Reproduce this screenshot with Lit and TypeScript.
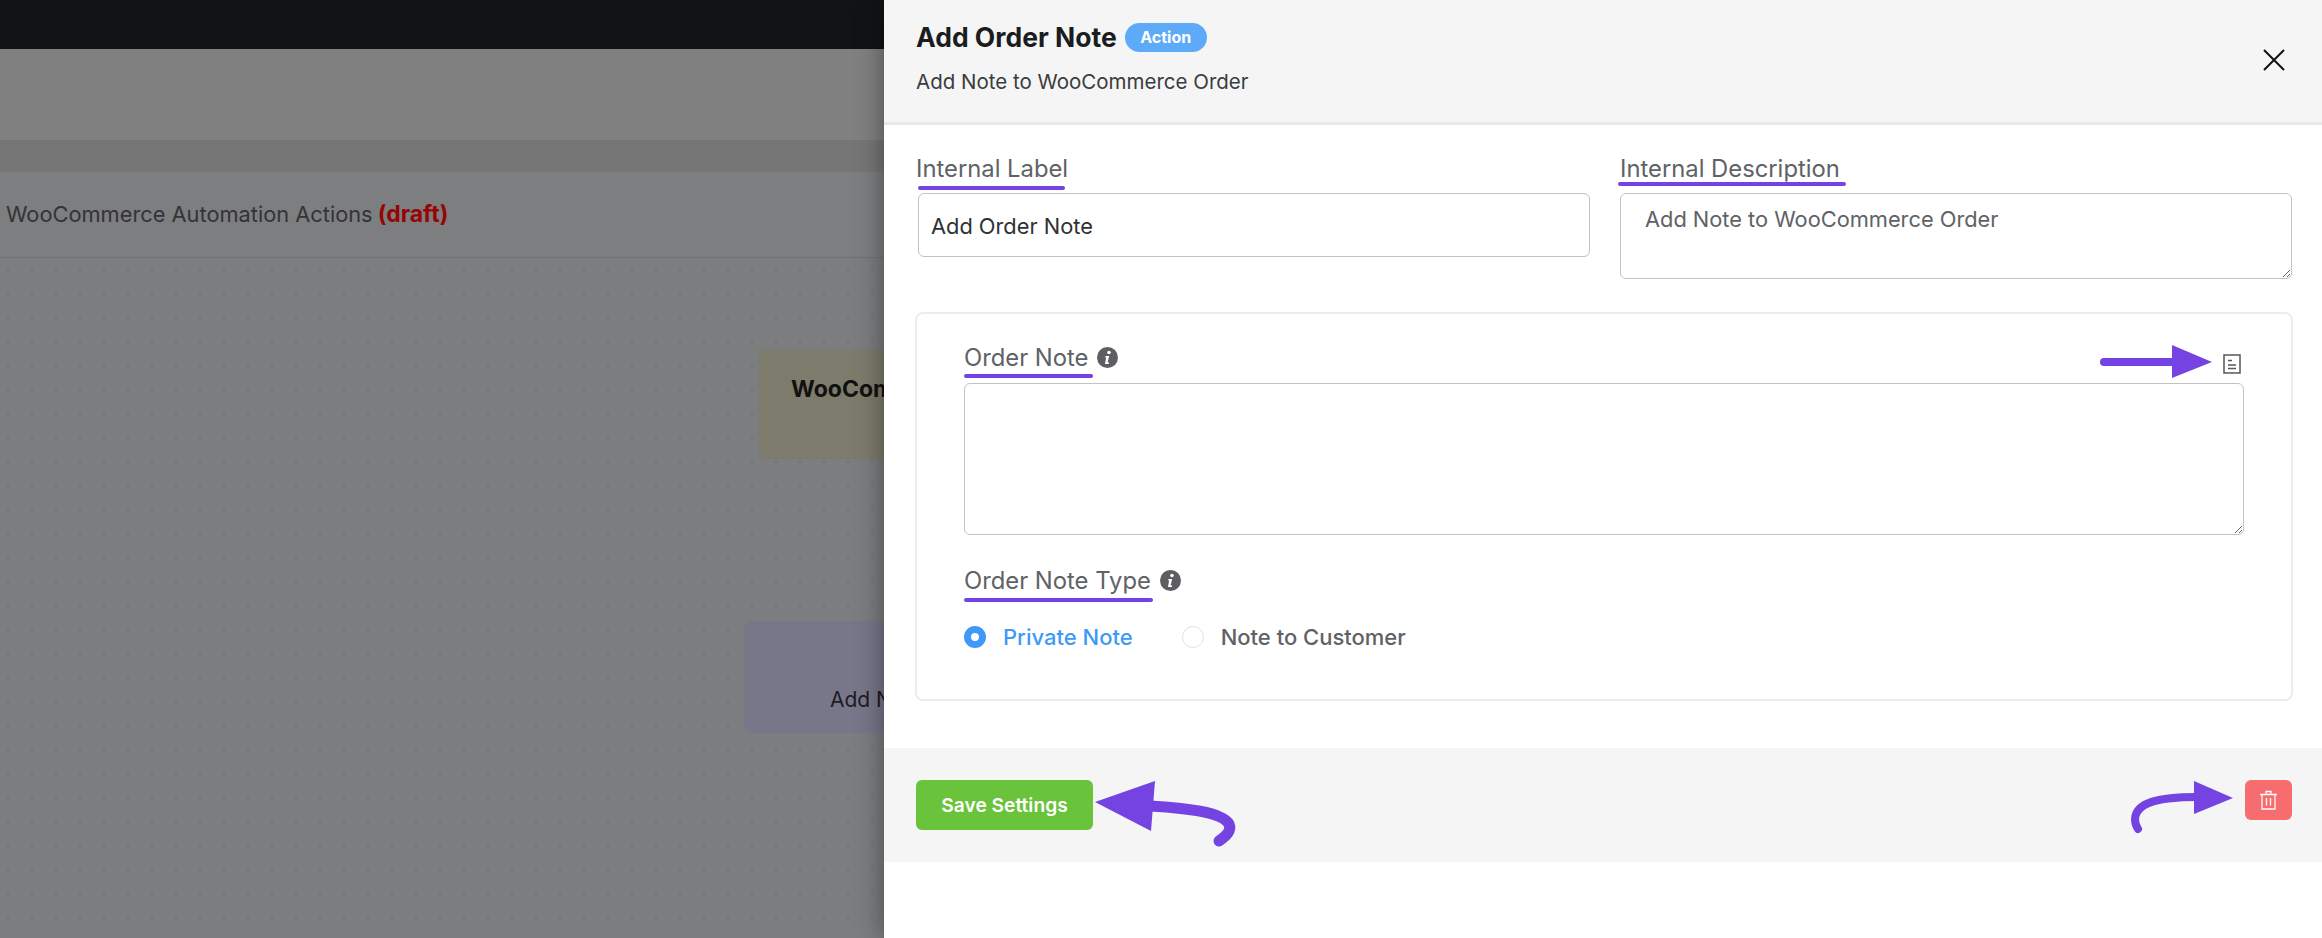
import { LitElement, html, css, svg } from "lit";
import { customElement } from "lit/decorators.js";

const PURPLE = "#7443e2";

const infoIcon = html`<svg class="info" viewBox="0 0 20 20" aria-hidden="true">
  <circle cx="10" cy="10" r="10" fill="#5c5e62"></circle>
  <circle cx="11.4" cy="5.2" r="1.7" fill="#fff"></circle>
  <path d="M8 8.6h3.6l-1.5 6.2h1.5l-.3 1.3H7.6l1.1-6.2H7.8z" fill="#fff"></path>
</svg>`;

@customElement("app-root")
export class AppRoot extends LitElement {
  static styles = css`
    :host {
      display: block;
      width: 2322px;
      height: 938px;
      position: relative;
      overflow: hidden;
      font-family: Inter, "Liberation Sans", sans-serif;
      background: #fff;
    }
    * { box-sizing: border-box; }
    .page { display: flex; width: 100%; height: 100%; }

    /* dimmed app behind the drawer */
    .backdrop {
      width: 884px;
      flex: none;
      display: flex;
      flex-direction: column;
      overflow: hidden;
    }
    .topbar { height: 49px; background: #111315; flex: none; }
    .band-a { height: 91px; background: #808080; flex: none; }
    .band-b { height: 32px; background: #767676; flex: none; }
    .flow-title {
      height: 86px;
      flex: none;
      background: #7c7e7f;
      border-bottom: 1px solid #6f7172;
      display: flex;
      align-items: center;
      padding: 0 0 2px 6px;
      font-size: 21.8px;
      color: #333436;
      white-space: nowrap;
      gap: 5px;
    }
    .flow-title b { color: #960505; font-weight: 700; font-size: 23px; }
    .canvas {
      flex: 1;
      position: relative;
      background-color: #7b7d7e;
      background-image: radial-gradient(circle at center, #6f7172 0, #6f7172 1px, transparent 1.4px);
      background-size: 24px 24px;
      background-position: -4px 0;
    }
    .node {
      position: absolute;
      border-radius: 8px;
      white-space: nowrap;
      font-size: 23px;
      color: #111;
    }
    .node.trigger {
      left: 759px; top: 91px; width: 240px; height: 110px;
      background: #7d7b6b;
      padding: 26px 0 0 32px;
      font-weight: 700;
    }
    .node.action {
      left: 744px; top: 363px; width: 260px; height: 112px;
      background: #78778a;
      padding: 66px 0 0 86px;
      font-size: 21px;
      color: #1c1c22;
    }

    /* drawer */
    .drawer {
      flex: 1;
      min-width: 0;
      position: relative;
      background: #fff;
      display: flex;
      flex-direction: column;
      box-shadow: 0 0 26px rgba(0, 0, 0, 0.42);
    }
    .head {
      height: 125px;
      flex: none;
      background: #f5f5f5;
      border-bottom: 3px solid #e8e8e8;
      padding: 22px 37px 0 32px;
      display: flex;
      justify-content: space-between;
    }
    .title-row { display: flex; align-items: center; gap: 8px; height: 30px; }
    .title { font-size: 26.5px; font-weight: 700; color: #1a1c1e; white-space: nowrap; }
    .badge {
      height: 29px;
      width: 82px;
      border-radius: 15px;
      background: #5dabf8;
      color: #fff;
      font-size: 16px;
      font-weight: 700;
      display: flex;
      align-items: center;
      justify-content: center;
    }
    .sub { margin-top: 19px; font-size: 20.5px; color: #3a3c3f; line-height: 22px; }
    .close { width: 22px; height: 22px; margin-top: 27px; display: block; }

    .body { padding: 0 29px 0 31px; flex: none; }
    .row {
      display: grid;
      grid-template-columns: 674px 673px;
      column-gap: 30px;
      padding: 28px 0 0 1px;
    }
    label, .lbl {
      display: block;
      font-size: 23.8px;
      line-height: 32px;
      color: #606266;
      white-space: nowrap;
    }
    .row label { height: 40px; }
    input, textarea {
      display: block;
      width: 100%;
      background: #fff;
      border: 1.5px solid #c0c2c6;
      border-radius: 6px;
      font: inherit;
      outline: none;
    }
    .name { width: 672px; height: 64px; margin-left: 2px; padding: 2px 12px 0; font-size: 21.8px; color: #303133; }
    .desc { height: 86px; padding: 3px 24px; font-size: 21.8px; line-height: 44px; color: #606266; width: 672px; }

    .card {
      margin-top: 33px;
      height: 389px;
      border: 2px solid #ececee;
      border-radius: 8px;
      padding: 22px 48px 0 47px;
    }
    .lbl-row { display: flex; align-items: center; gap: 9px; height: 44px; }
    .lbl-row .spacer { flex: 1; }
    .info { width: 21px; height: 21px; display: block; margin-top: -1px; }
    .doc { width: 18px; height: 20px; display: block; margin: 11px 2px 0 0; }
    .note { height: 152px; width: 1280px; margin-top: 3px; }
    .type { margin-top: 24px; }
    .radios { display: flex; align-items: center; margin-top: 22px; height: 24px; font-size: 22px; font-weight: 500; }
    .radio { display: flex; align-items: center; gap: 17px; color: #606266; margin-right: 49px; white-space: nowrap; }
    .radio i {
      width: 22px;
      height: 22px;
      border-radius: 50%;
      border: 1.5px solid #e0e2e6;
      background: #fff;
      flex: none;
    }
    .radio.on { color: #3e99f7; }
    .radio.on i { border: 7px solid #3e99f7; }

    .foot {
      margin-top: 47px;
      height: 114px;
      flex: none;
      background: #f5f5f5;
      padding: 32px 30px 0 32px;
      display: flex;
      justify-content: space-between;
      align-items: flex-start;
    }
    button { border: 0; font: inherit; color: #fff; }
    .save {
      width: 177px;
      height: 50px;
      border-radius: 6px;
      background: #69c33b;
      font-size: 19.2px;
      font-weight: 600;
    }
    .trash {
      width: 47px;
      height: 40px;
      border-radius: 6px;
      background: #f76d6f;
      display: flex;
      align-items: center;
      justify-content: center;
      padding: 0;
    }
    .trash svg { width: 19px; height: 20px; display: block; }

    .marks { position: absolute; left: 0; top: 0; width: 2322px; height: 938px; pointer-events: none; }
  `;

  render() {
    return html`
      <div class="page">
        <div class="backdrop">
          <div class="topbar"></div>
          <div class="band-a"></div>
          <div class="band-b"></div>
          <div class="flow-title">WooCommerce Automation Actions <b>(draft)</b></div>
          <div class="canvas">
            <div class="node trigger">WooCommerce</div>
            <div class="node action">Add Note</div>
          </div>
        </div>

        <section class="drawer">
          <header class="head">
            <div>
              <div class="title-row">
                <span class="title">Add Order Note</span>
                <span class="badge">Action</span>
              </div>
              <div class="sub">Add Note to WooCommerce Order</div>
            </div>
            <svg class="close" viewBox="0 0 22 22" fill="none" stroke="#111" stroke-width="2" aria-label="Close">
              <path d="M1 1l20 20M21 1L1 21"></path>
            </svg>
          </header>

          <div class="body">
            <div class="row">
              <div>
                <label>Internal Label</label>
                <input class="name" value="Add Order Note" />
              </div>
              <div>
                <label>Internal Description</label>
                <textarea class="desc">Add Note to WooCommerce Order</textarea>
              </div>
            </div>

            <div class="card">
              <div class="lbl-row">
                <span class="lbl">Order Note</span>
                ${infoIcon}
                <span class="spacer"></span>
                <svg class="doc" viewBox="0 0 18 20" fill="none" stroke="#55575b" stroke-width="1.5" aria-hidden="true">
                  <rect x="1" y="1" width="16" height="18"></rect>
                  <path d="M5 6.5h4M5 11h8M5 14.5h8"></path>
                </svg>
              </div>
              <textarea class="note"></textarea>
              <div class="lbl-row type">
                <span class="lbl">Order Note Type</span>
                ${infoIcon}
              </div>
              <div class="radios">
                <span class="radio on"><i></i>Private Note</span>
                <span class="radio"><i></i>Note to Customer</span>
              </div>
            </div>
          </div>

          <footer class="foot">
            <button class="save">Save Settings</button>
            <button class="trash" aria-label="Delete">
              <svg viewBox="0 0 19 20" fill="none" stroke="#fff" stroke-width="1.3" aria-hidden="true">
                <path d="M1 4.5h17M3 4.5V19h13V4.5M7 4.5V1.5h5v3M7.5 8v7.5M11.5 8v7.5"></path>
              </svg>
            </button>
          </footer>
        </section>
      </div>

      <svg class="marks" viewBox="0 0 2322 938" aria-hidden="true">
        ${svg`
          <g fill="none" stroke="${PURPLE}" stroke-linecap="round">
            <path stroke-width="4" d="M920 188H1063"></path>
            <path stroke-width="4" d="M1620 184H1844"></path>
            <path stroke-width="4" d="M966 376H1091"></path>
            <path stroke-width="4" d="M966 600H1151"></path>
            <path stroke-width="8" d="M2104 362H2175"></path>
            <path stroke-width="11" d="M1150 806C1185 808 1222 812 1229 824C1232 831 1226 836 1219 841"></path>
            <path stroke-width="8" d="M2196 797C2160 797 2136 802 2135 819C2135 823 2136 826 2138 829"></path>
          </g>
          <g fill="${PURPLE}">
            <path d="M2172 345L2212 362L2172 378Z"></path>
            <path d="M1095 802L1155 781L1151 831Z"></path>
            <path d="M2194 781L2233 798L2194 814Z"></path>
          </g>
        `}
      </svg>
    `;
  }
}
